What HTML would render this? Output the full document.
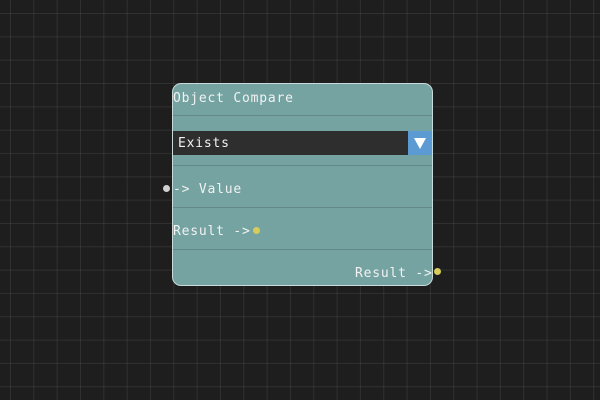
<!DOCTYPE html>
<html><head><style>
html,body{margin:0;padding:0;}
body{width:600px;height:400px;overflow:hidden;position:relative;background-color:#1e1e1e;
background-image:linear-gradient(to right,rgba(255,255,255,0.08) 1px,transparent 1px),linear-gradient(to bottom,rgba(255,255,255,0.08) 1px,transparent 1px);
background-size:23.33px 23.33px;background-position:10px 13px;
font-family:"DejaVu Sans Mono","Liberation Mono",monospace;}
.node{position:absolute;left:172px;top:83px;width:259px;height:201px;background:#74a3a1;border:1px solid #c8dad9;border-radius:9px;overflow:hidden;}
.t{position:absolute;color:#f2f2f2;font-size:13px;letter-spacing:0.8px;line-height:16px;white-space:pre;}
.hl{position:absolute;left:0;right:0;height:1px;background:#628a88;}
.dd{position:absolute;left:0;top:47px;width:259px;height:24px;background:#2e2e2e;}
.btn{position:absolute;right:0;top:0;width:24px;height:24px;background:#5b9ad2;}
.tri{position:absolute;left:6px;top:7px;width:0;height:0;border-left:6px solid transparent;border-right:6px solid transparent;border-top:11px solid #fff;}
.dot{position:absolute;width:7px;height:7px;border-radius:50%;}
</style></head><body>
<div class="node">
<div class="t" style="left:0;top:7px;">Object Compare</div>
<div class="hl" style="top:31px"></div>
<div class="dd"><div class="t" style="left:5px;top:5px;">Exists</div><div class="btn"><div class="tri"></div></div></div>
<div class="hl" style="top:81px"></div>
<div class="t" style="left:0;top:98px;">-&gt; Value</div>
<div class="hl" style="top:123px"></div>
<div class="t" style="left:0;top:140px;">Result -&gt;</div>
<div class="hl" style="top:165px"></div>
<div class="t" style="left:182px;top:182px;">Result -&gt;</div>
</div>
<div class="dot" style="left:163px;top:185px;background:#d0d0d0"></div>
<div class="dot" style="left:253px;top:227px;background:#d6cc5c"></div>
<div class="dot" style="left:434px;top:268px;background:#d6cc5c"></div>
</body></html>
